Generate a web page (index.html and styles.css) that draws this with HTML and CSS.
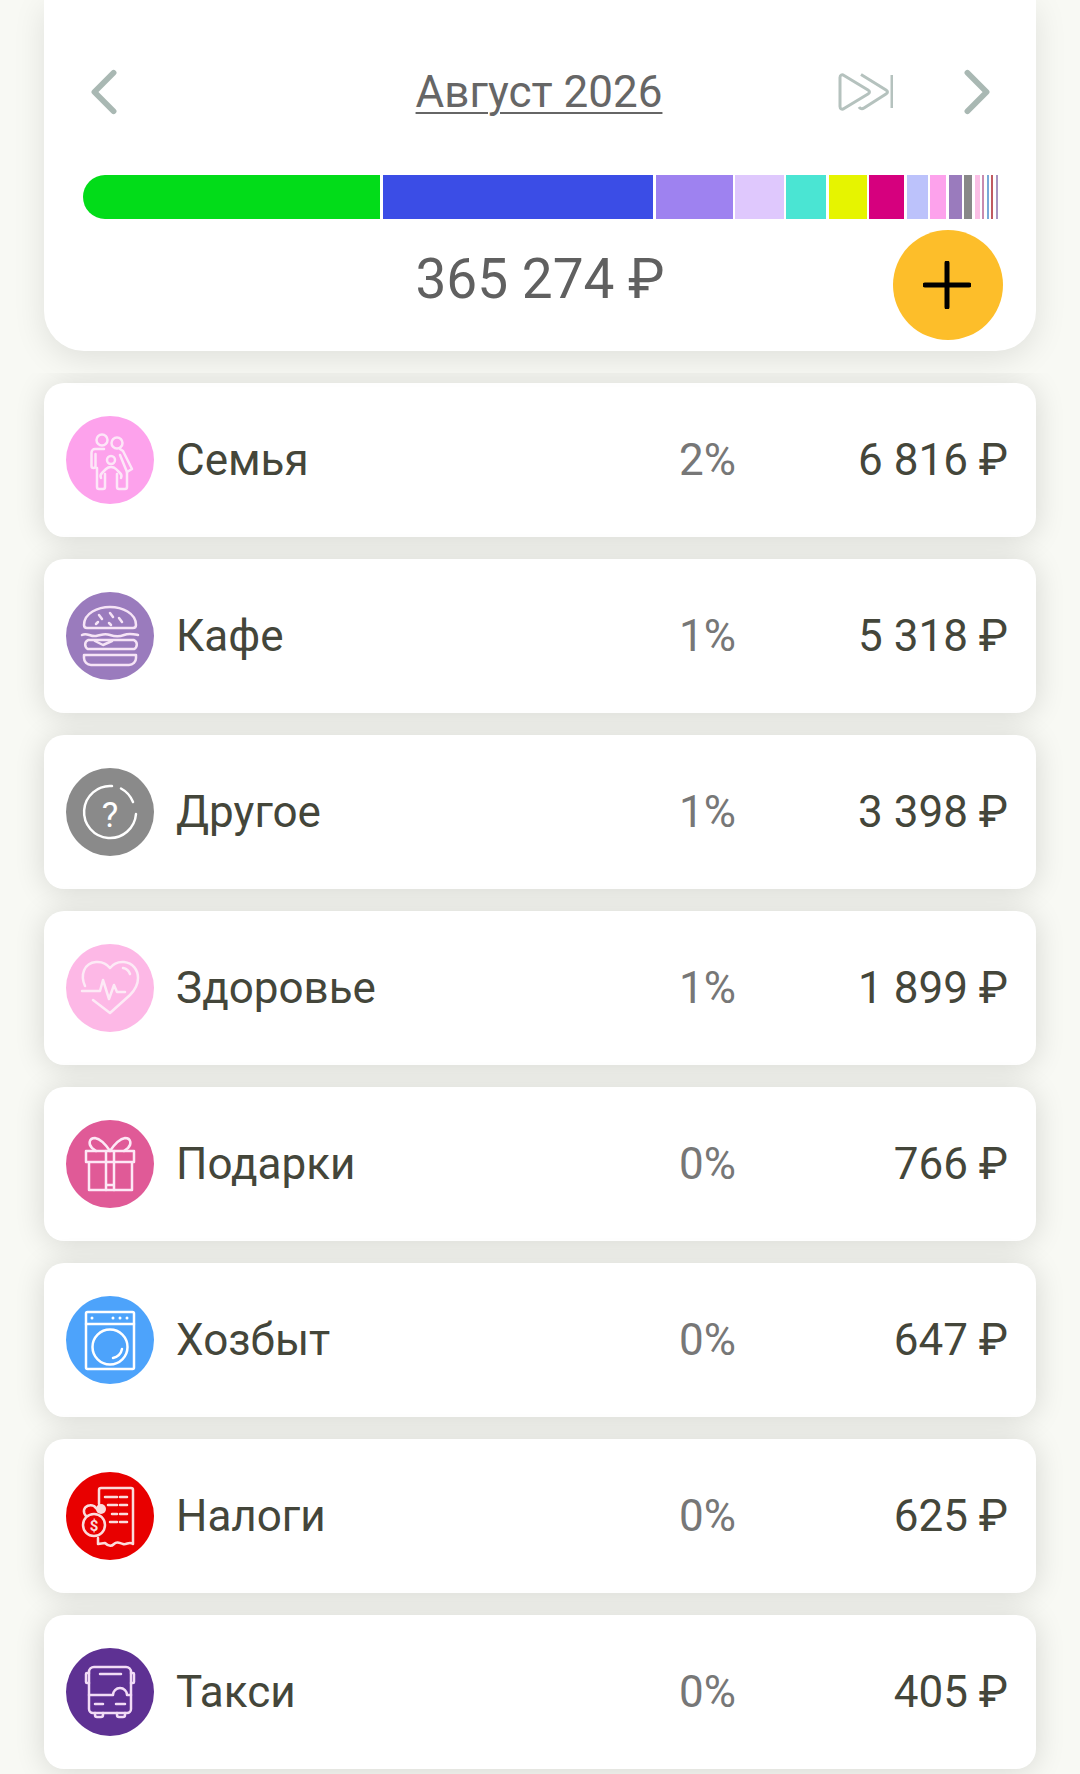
FILE: index.html
```html
<!DOCTYPE html>
<html lang="ru">
<head>
  <meta charset="UTF-8" />
  <meta name="viewport" content="width=device-width, initial-scale=1.0"/>
  <title>Расходы</title>
  <link rel="stylesheet" href="styles.css">
</head>
<body>
  <section class="summary">
    <div class="month-nav">
      <svg class="chevron" viewBox="0 0 28 48"><path d="M24 4 4 24l20 20"/></svg>
      <a href="#" class="month">Август 2026</a>
      <svg class="skip" viewBox="0 0 56 38"><path d="M3 4.500C3 2 5 1 7 2.500L31 17c2 1.200 2 2.800 0 4L7 35.500C5 37 3 36 3 33.500z"/><path d="M24 1.500 49 17c2 1.200 2 2.800 0 4L27 35c-2 1.300-4 .5-5-1"/><path class="skip-bar" d="M55 2v33"/></svg>
      <svg class="chevron" viewBox="0 0 28 48"><path d="M4 4l20 20L4 44"/></svg>
    </div>

    <div class="bar">
      <span style="width: 297px; background: #02dc19"></span>
      <span style="width: 270.600px; background: #3b4de6"></span>
      <span style="width: 77.400px; background: #9e82f0"></span>
      <span style="width: 48.500px; background: #dfc8fd"></span>
      <span style="width: 40px; background: #4ae5d3"></span>
      <span style="width: 38px; background: #e6f400"></span>
      <span style="width: 35px; background: #d6007e"></span>
      <span style="width: 21px; background: #bcc2fb"></span>
      <span style="width: 16px; background: #fda2ec"></span>
      <span style="width: 13px; background: #9a7bbd"></span>
      <span style="width: 8px; background: #888888"></span>
      <span style="width: 5px; background: #fbbfe6"></span>
      <span style="width: 2px; background: #c88bb0"></span>
      <span style="width: 2px; background: #78a8d8"></span>
      <span style="width: 2px; background: #c05a60"></span>
      <span style="width: 2px; background: #a894c0"></span>
    </div>

    <div class="total">365 274 ₽</div>

    <button class="add-btn" aria-label="Добавить">
      <svg viewBox="0 0 48 48"><path d="M24 2v44M2 24h44"/></svg>
    </button>
  </section>

  <main class="rows">
    <div class="row">
      <svg class="cat-icon family" viewBox="0 0 88 88">
        <circle cx="36" cy="24" r="5.500"/><circle cx="51" cy="27" r="5.500"/><circle cx="45" cy="44" r="4"/>
        <path d="M38 33h-9a3.500 3.500 0 0 0-3.500 3.500V50a2 2 0 0 0 4 0V38M31 52v19a2 2 0 0 0 2 2h4a2 2 0 0 0 2-2V58"/>
        <path d="M54 39l7 17 5-3-9-18-3-2"/>
        <path d="M35 62c-1-2 0-4 1-5l4-4a7 7 0 0 1 10 0l4 4c1 1 2 3 1 5M51 58v13a2 2 0 0 0 2 2h6a2 2 0 0 0 2-2V56"/>
      </svg>
      <span class="cat-name">Семья</span>
      <span class="cat-pct">2%</span>
      <span class="cat-sum">6 816 ₽</span>
    </div>

    <div class="row">
      <svg class="cat-icon burger" viewBox="0 0 88 88">
        <path d="M18 33C18 21 32 15 44 15s26 6 26 18c0 2-1 3-3 3H21c-2 0-3-1-3-3z"/>
        <path d="M33 23l3 4M44 21l3 4M53 26l3 4M30 32l2-2M43 31l2 2"/>
        <path d="M16 43c5-3 8 2 14 1s8-3 14-1 9 2 14 0 9-1 14 0"/>
        <path d="M22 48h46a5 5 0 0 1 0 9H22a5 5 0 0 1 0-9z"/>
        <path d="M29 49l8 4 9-4"/>
        <path d="M18 63h52v3a7 7 0 0 1-7 7H25a7 7 0 0 1-7-7z"/>
      </svg>
      <span class="cat-name">Кафе</span>
      <span class="cat-pct">1%</span>
      <span class="cat-sum">5 318 ₽</span>
    </div>

    <div class="row">
      <svg class="cat-icon other" viewBox="0 0 88 88">
        <path d="M46 18.100A26 26 0 1 0 70 46"/>
        <path d="M55 20.500A26 26 0 0 1 67 34"/>
        <text x="44" y="59" text-anchor="middle" class="icon-glyph q">?</text>
      </svg>
      <span class="cat-name">Другое</span>
      <span class="cat-pct">1%</span>
      <span class="cat-sum">3 398 ₽</span>
    </div>

    <div class="row">
      <svg class="cat-icon health" viewBox="0 0 88 88">
        <path d="M19 42C14 31 18 19 30 18c6-.5 11 2 14 6 3-4 8-6.500 14-6 9 1 14 8 14 16 0 6-3 12-8 17L44 69 27 56"/>
        <path d="M16 47h18l3-11 6 19 5-14 3 7h8"/>
        <path d="M57 24c3 .5 6 3 7 6"/>
      </svg>
      <span class="cat-name">Здоровье</span>
      <span class="cat-pct">1%</span>
      <span class="cat-sum">1 899 ₽</span>
    </div>

    <div class="row">
      <svg class="cat-icon gift" viewBox="0 0 88 88">
        <path d="M20 31h48v11H20zM23 42h43v28H23z"/>
        <path d="M44 31c-4-6-9-12-15-13-6 0-7 6-3 10l4 3M44 31c4-6 9-12 15-13 6 0 7 6 3 10l-4 3"/>
        <path d="M40 31v39M48 31v39M40 65h8"/>
      </svg>
      <span class="cat-name">Подарки</span>
      <span class="cat-pct">0%</span>
      <span class="cat-sum">766 ₽</span>
    </div>

    <div class="row">
      <svg class="cat-icon washer" viewBox="0 0 88 88">
        <rect x="20" y="16" width="48" height="57" rx="1.500"/>
        <path d="M20 28h48"/>
        <circle cx="44" cy="51" r="17.500"/>
        <path d="M47 62c4-1 8-4 9-9"/>
        <circle class="dot" cx="26" cy="22" r="1.500"/><circle class="dot" cx="47" cy="22" r="1.500"/><circle class="dot" cx="54" cy="22" r="1.500"/><circle class="dot" cx="61" cy="22" r="1.500"/>
      </svg>
      <span class="cat-name">Хозбыт</span>
      <span class="cat-pct">0%</span>
      <span class="cat-sum">647 ₽</span>
    </div>

    <div class="row">
      <svg class="cat-icon tax" viewBox="0 0 88 88">
        <path d="M33 32V18a2 2 0 0 1 2-2h30a2 2 0 0 1 2 2v54c-4-3-6 1-10 0s-6-3-9 0-6 2-9-1l-7 1v-6"/>
        <path d="M39 25h12M54 25h7M42 33h9M54 33h7M46 42h5M54 42h7M44 50h7M54 50h7"/>
        <circle cx="28" cy="53" r="11"/>
        <path d="M20 44a7 7 0 0 1-2-6c1-4 6-6 10-4l3 3"/>
        <circle class="dot" cx="35" cy="37" r="5"/>
        <text x="28" y="58.500" text-anchor="middle" class="icon-glyph dollar">$</text>
      </svg>
      <span class="cat-name">Налоги</span>
      <span class="cat-pct">0%</span>
      <span class="cat-sum">625 ₽</span>
    </div>

    <div class="row">
      <svg class="cat-icon bus" viewBox="0 0 88 88">
        <path d="M28 19h32a5 5 0 0 1 5 5v37a4 4 0 0 1-4 4H27a4 4 0 0 1-4-4V24a5 5 0 0 1 5-5z"/>
        <path d="M23 25h-2a1 1 0 0 0-1 1v8a1 1 0 0 0 1 1h2M65 25h2a1 1 0 0 1 1 1v8a1 1 0 0 1-1 1h-2"/>
        <path d="M34 26h21M23 47h24M47 47a7 7 0 0 1 14 0h4M29 56h8M50 56h9"/>
        <path d="M29 65v2a2 2 0 0 0 2 2h4a2 2 0 0 0 2-2v-2M51 65v2a2 2 0 0 0 2 2h4a2 2 0 0 0 2-2v-2"/>
      </svg>
      <span class="cat-name">Такси</span>
      <span class="cat-pct">0%</span>
      <span class="cat-sum">405 ₽</span>
    </div>
  </main>
</body>
</html>
```

FILE: styles.css
```css
body {
  font-family: Roboto, Arial, sans-serif;
  margin: 0;
  background: #f8f9f4;
  color: #44463a;
  overflow: hidden;
}

.summary {
  position: relative;
  height: 351px;
  box-sizing: border-box;
  margin: 0 44px;
  padding-top: 70px;
  background: #fff;
  border-radius: 0 0 40px 40px;
  box-shadow: 0 8px 32px rgba(0, 0, 0, 0.1);
}

.month-nav {
  display: flex;
  align-items: center;
  height: 44px;
  padding: 0 46px;
}

.chevron {
  width: 28px;
  height: 46px;
  flex: none;
  fill: none;
  stroke: #a9b8b3;
  stroke-width: 6;
  stroke-linecap: round;
  stroke-linejoin: round;
}

.month {
  flex: none;
  margin-left: 296px;
  width: 250px;
  font-size: 44px;
  line-height: 44px;
  color: #666;
  white-space: nowrap;
  text-align: center;
  text-decoration: underline;
  text-decoration-thickness: 2px;
  text-underline-offset: 5px;
}

.skip {
  margin-left: 173px;
  margin-right: 70px;
  width: 56px;
  height: 38px;
  flex: none;
  fill: none;
  stroke: #b5c2be;
  stroke-width: 3;
  stroke-linejoin: round;
}

.bar {
  display: flex;
  gap: 2.500px;
  height: 44px;
  margin: 61px 0 0 39px;
  border-radius: 22px 0 0 22px;
  overflow: hidden;
}

.bar span {
  display: block;
  flex: none;
}

.total {
  margin-top: 31px;
  font-size: 55px;
  line-height: 58px;
  text-align: center;
  color: #606060;
}

.add-btn {
  position: absolute;
  left: 849px;
  top: 230px;
  width: 110px;
  height: 110px;
  box-sizing: border-box;
  padding: 0 2px 0 0;
  border: none;
  border-radius: 50%;
  background: #fdbe2a;
  display: flex;
  align-items: center;
  justify-content: center;
}

.add-btn svg {
  width: 48px;
  height: 48px;
  fill: none;
  stroke: #000;
  stroke-width: 5;
  stroke-linecap: round;
}

.rows {
  display: flex;
  flex-direction: column;
  gap: 22px;
  margin-top: 22px;
  padding: 10px 44px 5px;
  overflow: hidden;
}

.row {
  display: grid;
  grid-template-columns: 88px 1fr 62px 272px;
  align-items: center;
  height: 154px;
  box-sizing: border-box;
  padding: 0 28px 0 22px;
  background: #fff;
  border-radius: 20px;
  box-shadow: 0 2px 30px rgba(0, 0, 0, 0.14);
  font-size: 44px;
}

.cat-icon {
  width: 88px;
  height: 88px;
  border-radius: 50%;
  fill: none;
  stroke: #fff;
  stroke-width: 2.500;
  stroke-linecap: round;
  stroke-linejoin: round;
}

.family { background: #fda2ec; stroke: #fde6f8; }
.burger { background: #9a7bbd; stroke: #f6e4f6; }
.other { background: #8a8a8a; }
.health { background: #fdb8e6; stroke: #fdeaf6; }
.gift { background: #e05a97; stroke: #fde8f6; }
.washer { background: #4da3fb; }
.tax { background: #e80000; stroke: #fbdcdc; }
.bus { background: #5e3193; stroke: #f2dcf6; }

.cat-icon .dot {
  fill: currentColor;
  stroke: none;
  color: #fff;
}

.tax .dot {
  color: #fbdcdc;
}

.icon-glyph {
  fill: #fff;
  stroke: none;
  font-family: Roboto, Arial, sans-serif;
}

.icon-glyph.q {
  font-size: 35px;
  font-weight: 400;
}

.icon-glyph.dollar {
  font-size: 15px;
  font-weight: 700;
  fill: #fbdcdc;
}

.cat-name {
  padding-left: 22px;
}

.cat-pct {
  text-align: right;
  color: #777;
}

.cat-sum {
  text-align: right;
  white-space: nowrap;
}
```
